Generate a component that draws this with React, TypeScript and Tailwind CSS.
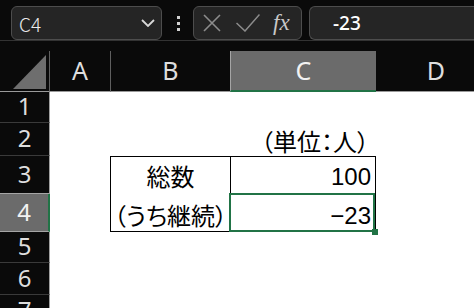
const rows = [
  { n: 1, h: 31 },
  { n: 2, h: 33 },
  { n: 3, h: 38 },
  { n: 4, h: 38 },
  { n: 5, h: 31 },
  { n: 6, h: 32 },
  { n: 7, h: 32 },
];

function Chevron() {
  return (
    <svg width="14" height="8" viewBox="0 0 14 8" fill="none">
      <path d="M1 1 L7 7 L13 1" stroke="#d8d8d8" strokeWidth="1.8" />
    </svg>
  );
}

export default function App() {
  return (
    <div className="w-[474px] h-[308px] overflow-hidden bg-[#0a0a0a] flex flex-col">
      {/* formula bar */}
      <div className="h-[41px] shrink-0 border-b border-[#333333] flex items-start pt-[6px]">
        <div className="ml-[11px] w-[151px] h-[34px] shrink-0 rounded-[6px] border border-[#4d4d4d] bg-[#252525] flex items-center justify-between pl-[7px] pr-[6px]">
          <span className="text-[19px] leading-none text-[#ececec] font-['Noto_Sans_CJK_JP',sans-serif] font-light">C4</span>
          <Chevron />
        </div>
        <div className="ml-[14px] w-[4px] h-[34px] shrink-0 flex flex-col items-center justify-center gap-[3px]">
          <div className="w-[3px] h-[3px] bg-[#d0d0d0]" />
          <div className="w-[3px] h-[3px] bg-[#d0d0d0]" />
          <div className="w-[3px] h-[3px] bg-[#d0d0d0]" />
        </div>
        <div className="ml-[13px] w-[109px] h-[34px] shrink-0 rounded-[6px] border border-[#4d4d4d] bg-[#252525] flex items-center pl-[9px]">
          <svg width="18" height="18" viewBox="0 0 18 18" fill="none">
            <path d="M1 1 L17 17 M17 1 L1 17" stroke="#8c8c8c" strokeWidth="1.6" />
          </svg>
          <svg className="ml-[15px]" width="24" height="18" viewBox="0 0 24 18" fill="none">
            <path d="M0.5 9 L9 17 L23.5 0.5" stroke="#8c8c8c" strokeWidth="1.5" />
          </svg>
          <span className="ml-[13px] text-[23px] leading-none italic text-[#c8c8c8] font-['Liberation_Serif',serif] -mt-[2px]">fx</span>
        </div>
        <div className="ml-[7px] flex-1 h-[34px] rounded-l-[6px] border border-r-0 border-[#4d4d4d] bg-[#252525] flex items-center pl-[23px]">
          <span className="text-[19px] leading-none font-medium text-white font-['Noto_Sans',sans-serif]">-23</span>
        </div>
      </div>

      {/* column headers */}
      <div className="mt-[10px] h-[41px] shrink-0 flex text-[25px] text-[#dedede] font-['Noto_Sans',sans-serif]">
        <div className="w-[50px] shrink-0 border-r border-b border-r-[#5f5f5f] border-b-[#9a9a9a] flex items-end justify-end pr-[3px] pb-[2px]">
          <svg width="33" height="34" viewBox="0 0 33 34">
            <path d="M0 34 L33 0 L33 34 Z" fill="#6e6e6e" />
          </svg>
        </div>
        <div className="w-[60px] shrink-0 border-b border-[#9a9a9a] flex items-center justify-center">A</div>
        <div className="w-[120px] shrink-0 border-l border-b border-l-[#5f5f5f] border-b-[#9a9a9a] flex items-center justify-center">B</div>
        <div className="w-[146px] shrink-0 bg-[#6b6b6b] border-l border-l-[#a5a5a5] border-b-2 border-b-[#217346] flex items-center justify-center text-[#f2f2f2]">C</div>
        <div className="w-[120px] shrink-0 border-b border-[#9a9a9a] flex items-center justify-center">D</div>
      </div>

      {/* body */}
      <div className="flex flex-1 min-h-0">
        <div className="w-[50px] shrink-0 flex flex-col text-[24px] text-[#dedede] font-['Noto_Sans',sans-serif]">
          {rows.map((r) =>
            r.n === 4 ? (
              <div
                key={r.n}
                style={{ height: r.h }}
                className="shrink-0 bg-[#6b6b6b] border-b border-b-[#a5a5a5] border-r-2 border-r-[#217346] flex items-center justify-center pb-[2px] text-[#f2f2f2]"
              >
                {r.n}
              </div>
            ) : (
              <div
                key={r.n}
                style={{ height: r.h }}
                className={
                  r.n === 3
                    ? "shrink-0 border-b border-b-[#a5a5a5] border-r border-r-[#a0a0a0] flex items-center justify-center pb-[2px]"
                    : "shrink-0 border-b border-b-[#3a3a3a] border-r border-r-[#a0a0a0] flex items-center justify-center pb-[2px]"
                }
              >
                {r.n}
              </div>
            )
          )}
        </div>

        <div className="flex-1 bg-white grid grid-cols-[60px_120px_146px_120px] grid-rows-[31px_33px_38px_38px_31px_32px_32px] text-[24px] leading-[24px] text-black font-['Liberation_Sans','Noto_Sans_CJK_JP',sans-serif] [font-feature-settings:'palt']">
          {/* row 1 */}
          <div />
          <div />
          <div />
          <div />
          {/* row 2 */}
          <div />
          <div />
          <div className="flex items-end justify-end pr-[7px] pb-[1px] whitespace-nowrap">（単位：人）</div>
          <div />
          {/* row 3 */}
          <div />
          <div className="border-l border-t border-black flex items-end justify-center pb-[4px] whitespace-nowrap">総数</div>
          <div className="border border-black flex items-end justify-end pr-[4px] pb-[4px]">100</div>
          <div />
          {/* row 4 */}
          <div />
          <div className="border-l border-b border-black flex items-end justify-center pb-[2px] whitespace-nowrap">（うち継続）</div>
          <div className="relative border-r border-b border-black flex items-end justify-end pr-[4px] pb-[3px]">
            −23
            <div className="absolute left-[-1px] top-[-1px] right-0 bottom-[-1px] border-2 border-[#217346]" />
            <div className="absolute right-[-3px] bottom-[-4px] w-[6px] h-[6px] bg-[#217346]" />
          </div>
          <div />
          {/* rows 5-7 */}
          <div /><div /><div /><div />
          <div /><div /><div /><div />
          <div /><div /><div /><div />
        </div>
      </div>
    </div>
  );
}
